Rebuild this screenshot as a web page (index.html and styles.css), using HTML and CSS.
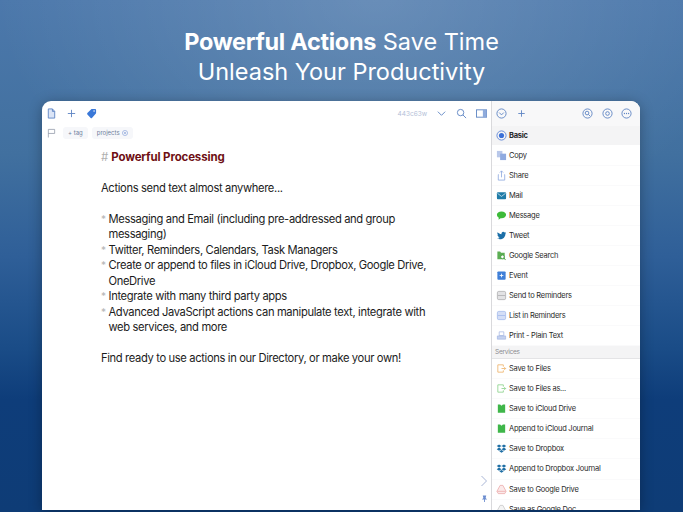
FILE: index.html
```html
<!DOCTYPE html>
<html lang="en">
<head>
  <meta charset="UTF-8">
  <title>Powerful Actions</title>
  <meta name="viewport" content="width=device-width, initial-scale=1.0">
  <link rel="stylesheet" href="styles.css">
</head>
<body>
  <div class="page">
    <h1 class="headline"><b>Powerful Actions</b> Save Time<br>Unleash Your Productivity</h1>

    <div class="window">
      <div class="editor">
        <div class="toolbar">
          <svg class="icon" viewBox="0 0 12 12"><path d="M2.500 1h4.500l2.500 2.700V11h-7z" fill="#dbe5f7" stroke="#5f86c4"/><path d="M7 1v2.700h2.500" class="line"/></svg>
          <svg class="icon" viewBox="0 0 12 12"><path d="M6 2v8M2 6h8" class="line"/></svg>
          <svg class="icon" viewBox="0 0 12 12"><path d="M1.500 5.500L6 1.200c.2-.2.400-.2.600-.2h3.400c.6 0 1 .4 1 1v3.400c0 .3 0 .5-.2.700L6.500 10.800c-.4.400-1 .4-1.400 0L1.500 7c-.4-.4-.4-1 0-1.500z" fill="#3a78d8"/><circle cx="8.800" cy="3.200" r=".8" fill="#fff"/></svg>
          <span class="hash">443c63w</span>
          <svg class="icon" viewBox="0 0 12 12"><path d="M2 4l4 4 4-4" class="line"/></svg>
          <svg class="icon" viewBox="0 0 12 12"><circle cx="5" cy="5" r="3.500" class="line"/><path d="M7.500 7.500L11 11" class="line"/></svg>
          <svg class="icon" viewBox="0 0 12 12"><rect x=".5" y="2" width="11" height="8" class="line"/><rect x="7.500" y="2" width="4" height="8" fill="#8fabdc"/></svg>
        </div>
        <div class="tagbar">
          <svg class="flag" viewBox="0 0 10 10"><path d="M1.500 10V1h7v4.500h-7" fill="none" stroke="#8a93a3" stroke-width=".8"/></svg>
          <span class="tag">+ tag</span>
          <span class="tag">projects <svg class="tag-x" viewBox="0 0 8 8"><circle cx="4" cy="4" r="3.400" fill="none" stroke="#7d9ad6" stroke-width=".8"/><path d="M2.700 2.700l2.600 2.600M5.300 2.700L2.700 5.300" stroke="#7d9ad6" stroke-width=".8"/></svg></span>
        </div>
        <div class="text">
          <p class="heading"><span class="mark">#</span> <b>Powerful Processing</b></p>
          <p>Actions send text almost anywhere...</p>
          <ul>
            <li>Messaging and Email (including pre-addressed and group messaging)</li>
            <li>Twitter, Reminders, Calendars, Task Managers</li>
            <li>Create or append to files in iCloud Drive, Dropbox, Google Drive, OneDrive</li>
            <li>Integrate with many third party apps</li>
            <li>Advanced JavaScript actions can manipulate text, integrate with web services, and more</li>
          </ul>
          <p>Find ready to use actions in our Directory, or make your own!</p>
        </div>
        <div class="side-controls">
          <svg class="chev" viewBox="0 0 8 12"><path d="M1.500 1l5 5-5 5" fill="none" stroke="#a9b6d6" stroke-width="1"/></svg>
          <svg class="pin" viewBox="0 0 8 8"><path d="M2 .5h4L5.300 3.500 7 5H4.500V8h-1V5H1l1.700-1.500z" fill="#6d8ed0"/></svg>
        </div>
      </div>

      <div class="actions">
        <div class="actions-bar">
          <svg class="icon" viewBox="0 0 12 12"><circle cx="6" cy="6" r="5" class="line"/><path d="M3.500 5l2.500 2.500L8.500 5" class="line"/></svg>
          <svg class="icon" viewBox="0 0 12 12"><path d="M6 2.500v7M2.500 6h7" class="line"/></svg>
          <span class="spacer"></span>
          <svg class="icon" viewBox="0 0 12 12"><circle cx="6" cy="6" r="5" class="line"/><circle cx="5.500" cy="5.500" r="2" class="line"/><path d="M7 7l1.800 1.800" class="line"/></svg>
          <svg class="icon" viewBox="0 0 12 12"><circle cx="6" cy="6" r="5" class="line"/><circle cx="6" cy="6" r="2" class="line"/></svg>
          <svg class="icon" viewBox="0 0 12 12"><circle cx="6" cy="6" r="5" class="line"/><circle cx="3.700" cy="6" r=".7" fill="#5f86c4"/><circle cx="6" cy="6" r=".7" fill="#5f86c4"/><circle cx="8.300" cy="6" r=".7" fill="#5f86c4"/></svg>
        </div>
        <div class="group current">
          <svg class="row-icon" viewBox="0 0 12 12"><circle cx="6" cy="6" r="5" fill="none" stroke="#5f86d8" stroke-width="1"/><circle cx="6" cy="6" r="2.800" fill="#3a6fd8"/></svg>
          <b>Basic</b>
        </div>
        <div class="row"><svg class="row-icon" viewBox="0 0 12 12"><rect x="1" y="1" width="6" height="7" fill="#b9c8ea"/><rect x="4.500" y="4" width="6.500" height="7" fill="#8faae0"/></svg>Copy</div>
        <div class="row"><svg class="row-icon" viewBox="0 0 12 12"><path d="M3 5H2.500v6h7V5H9M6 8V1M4.200 2.800L6 1l1.800 1.800" fill="none" stroke="#8faae0" stroke-width=".9"/></svg>Share</div>
        <div class="row"><svg class="row-icon" viewBox="0 0 12 12"><rect x="1" y="2.500" width="10" height="7.500" rx="1" fill="#1f7ca8"/><path d="M1.500 3.500L6 7l4.500-3.500" fill="none" stroke="#fff" stroke-width=".7"/></svg>Mail</div>
        <div class="row"><svg class="row-icon" viewBox="0 0 12 12"><path d="M6 1.500c3 0 5 1.700 5 3.800S9 9 6 9H5L2.800 10.500 3 8.400C1.800 7.700 1 6.600 1 5.300 1 3.200 3 1.500 6 1.500z" fill="#3dbb3a"/></svg>Message</div>
        <div class="row"><svg class="row-icon" viewBox="0 0 12 12"><path d="M11 3c-.4.200-.8.300-1.200.3.400-.2.800-.7.900-1.200-.4.300-.9.400-1.300.5A2 2 0 0 0 6 4.500C4.300 4.400 2.800 3.600 1.800 2.400c-.6 1-.3 2.200.6 2.800-.3 0-.7-.1-.9-.3 0 1 .7 1.900 1.700 2.100-.3.100-.6.100-.9 0 .3.800 1 1.400 1.900 1.400-.9.700-2 1-3.200.9 3.300 2 9.300.900 9.300-5.400.400-.3.700-.6.700-.9z" fill="#1c6fa8"/></svg>Tweet</div>
        <div class="row"><svg class="row-icon" viewBox="0 0 12 12"><path d="M1.500 1.500h3l1 1.500h4v7h-8z" fill="#5cae54"/><circle cx="7" cy="7.500" r="2" fill="#fff" stroke="#3f9a3c" stroke-width=".9"/><path d="M8.500 9l2 1.500" stroke="#3f9a3c"/></svg>Google Search</div>
        <div class="row"><svg class="row-icon" viewBox="0 0 12 12"><rect x="1.500" y="1.500" width="9" height="9" rx="1" fill="#3f7fd8"/><path d="M6 4v4M4 6h4" stroke="#fff" stroke-width=".9"/></svg>Event</div>
        <div class="row"><svg class="row-icon" viewBox="0 0 12 12"><rect x="1.500" y="1.500" width="9" height="9" rx="1.500" fill="#e2e2e4" stroke="#a8a8ac" stroke-width=".8"/><path d="M2 6h8" stroke="#a8a8ac" stroke-width=".8"/></svg>Send to Reminders</div>
        <div class="row"><svg class="row-icon" viewBox="0 0 12 12"><rect x="1.500" y="1.500" width="9" height="9" rx="1.500" fill="#d4def6" stroke="#9fb6ea" stroke-width=".8"/><path d="M2 6h8" stroke="#9fb6ea" stroke-width=".8"/></svg>List in Reminders</div>
        <div class="row"><svg class="row-icon" viewBox="0 0 12 12"><path d="M3.500 2h5v4h-5z" fill="#fff" stroke="#a3b5e2" stroke-width=".8"/><path d="M1.500 6.500h9V10h-9z" fill="#c5d2f0" stroke="#a3b5e2" stroke-width=".8"/></svg>Print - Plain Text</div>
        <div class="group section">Services</div>
        <div class="row"><svg class="row-icon" viewBox="0 0 12 12"><path d="M8 4V2H2v8h6V8M6 6h4.500M9 4.500L10.500 6 9 7.500" fill="none" stroke="#eeb36a" stroke-width=".9"/></svg>Save to Files</div>
        <div class="row"><svg class="row-icon" viewBox="0 0 12 12"><path d="M8 4V2H2v8h6V8M6 6h4.500M9 4.500L10.500 6 9 7.500" fill="none" stroke="#8bd28a" stroke-width=".9"/></svg>Save to Files as...</div>
        <div class="row"><svg class="row-icon" viewBox="0 0 12 12"><path d="M2 1.500h2.500L6 3l1.500-1.500H10v9H2z" fill="#3fb64a"/></svg>Save to iCloud Drive</div>
        <div class="row"><svg class="row-icon" viewBox="0 0 12 12"><path d="M2 1.500h2.500L6 3l1.500-1.500H10v9H2z" fill="#3fb64a"/></svg>Append to iCloud Journal</div>
        <div class="row"><svg class="row-icon" viewBox="0 0 12 12"><path d="M3.300 1.500L6 3.200 3.300 5 .8 3.200zM8.700 1.500l2.500 1.700L8.700 5 6 3.200zM3.300 5L6 6.800 3.300 8.500.8 6.800zM8.700 5l2.500 1.800-2.500 1.700L6 6.800zM3.600 9.100L6 7.500l2.400 1.600L6 10.700z" fill="#1f6fa5"/></svg>Save to Dropbox</div>
        <div class="row"><svg class="row-icon" viewBox="0 0 12 12"><path d="M3.300 1.500L6 3.200 3.300 5 .8 3.200zM8.700 1.500l2.500 1.700L8.700 5 6 3.200zM3.300 5L6 6.800 3.300 8.500.8 6.800zM8.700 5l2.500 1.800-2.500 1.700L6 6.800zM3.600 9.100L6 7.500l2.400 1.600L6 10.700z" fill="#1f6fa5"/></svg>Append to Dropbox Journal</div>
        <div class="row"><svg class="row-icon" viewBox="0 0 12 12"><path d="M4.500 1.500h3L11 8l-1.500 2.500h-7L1 8zM1.500 8h9" fill="#fbeaea" stroke="#eaa5a5" stroke-width=".8"/></svg>Save to Google Drive</div>
        <div class="row"><svg class="row-icon" viewBox="0 0 12 12"><path d="M4.500 1.500h3L11 8l-1.500 2.500h-7L1 8zM1.500 8h9" fill="#f4f4f4" stroke="#c4c4c4" stroke-width=".8"/></svg>Save as Google Doc</div>
      </div>
    </div>
  </div>
</body>
</html>
```

FILE: styles.css
```css
* {
  box-sizing: border-box;
}

body {
  margin: 0;
  font-family: Inter, "Liberation Sans", sans-serif;
  background: #0e3a70;
}

/* lighter patch at the top centre over the blue fade */
.page {
  width: 683px;
  height: 512px;
  overflow: hidden;
  padding-top: 27px;
  background:
    radial-gradient(ellipse 380px 240px at 55% 0, rgba(255, 255, 255, 0.16), rgba(255, 255, 255, 0)),
    linear-gradient(to bottom, #4c78ab 0%, #41709f 30%, #2f5f98 50%, #1a4c87 68%, #0e3d7a 78%, #0e3c76 100%);
}

.headline {
  margin: 0;
  height: 74px;
  text-align: center;
  color: #fff;
  font-size: 23.500px;
  line-height: 30px;
  font-weight: 400;
}

.headline b {
  letter-spacing: -.3px;
}

.window {
  display: flex;
  width: 598px;
  height: 409px;
  margin-left: 42px;
  background: #fff;
  border-radius: 9px 9px 0 0;
  overflow: hidden;
  box-shadow: 0 2px 14px rgba(0, 0, 0, 0.3);
}

.editor {
  position: relative;
  width: 450px;
  border-right: 1px solid #d9d9dc;
}

.line {
  fill: none;
  stroke: #5f86c4;
  stroke-width: 1;
}

.icon {
  width: 11px;
  height: 11px;
}

.toolbar {
  display: flex;
  align-items: center;
  gap: 9px;
  height: 25px;
  padding: 0 4px;
}

.hash {
  margin-left: auto;
  color: #b4c0d8;
  font-size: 6.500px;
}

.tagbar {
  display: flex;
  align-items: center;
  gap: 4px;
  height: 13px;
  padding-left: 5px;
}

.flag {
  width: 9px;
  height: 10px;
  margin-right: 3px;
}

.tag {
  display: flex;
  align-items: center;
  gap: 2px;
  height: 12px;
  padding: 0 5px;
  border-radius: 3px;
  background: #f6f7fa;
  color: #6f7f9c;
  font-size: 6px;
}

.tag-x {
  width: 6px;
  height: 6px;
}

.text {
  width: 335px;
  margin-top: 10.500px;
  margin-left: 59px;
  font-size: 11.200px;
  line-height: 15.500px;
  letter-spacing: -.36px;
  color: #1c1c1c;
}

.text p {
  margin: 0 0 15.500px;
}

.heading {
  font-size: 11.500px;
  letter-spacing: -.15px;
}

.heading b {
  color: #6e0f14;
}

.mark {
  color: #b0b0b0;
}

.text ul {
  list-style: none;
  margin: 0 0 15.500px;
  padding-left: 7.500px;
}

.text li::before {
  content: "*";
  float: left;
  margin-left: -7.500px;
  font-size: 10px;
  color: #b4b4b4;
}

.side-controls {
  position: absolute;
  right: 3px;
  bottom: 8px;
  display: flex;
  flex-direction: column;
  align-items: center;
  gap: 8px;
}

.chev {
  width: 8px;
  height: 12px;
}

.pin {
  width: 7px;
  height: 7px;
}

.actions {
  flex: 1;
  overflow: hidden;
  color: #2a2a2a;
  font-size: 7.500px;
  letter-spacing: -.25px;
}

.actions-bar {
  display: flex;
  align-items: center;
  gap: 8.500px;
  height: 25px;
  padding: 0 8px 0 4px;
  background: #f8f8f9;
}

.spacer {
  flex: 1;
}

.row-icon {
  width: 11px;
  height: 11px;
  margin-right: 2px;
  flex: none;
}

.group {
  display: flex;
  align-items: center;
  background: #f4f4f5;
}

.current {
  height: 18.500px;
  padding-left: 4px;
  margin-bottom: 1px;
}

.section {
  height: 12.500px;
  padding-left: 3px;
  color: #8a8a8e;
  font-size: 6.500px;
  border-bottom: 1px solid #e4e4e6;
}

.row {
  display: flex;
  align-items: center;
  height: 20.100px;
  padding-left: 4px;
  border-bottom: 1px solid #fafafb;
}
```
